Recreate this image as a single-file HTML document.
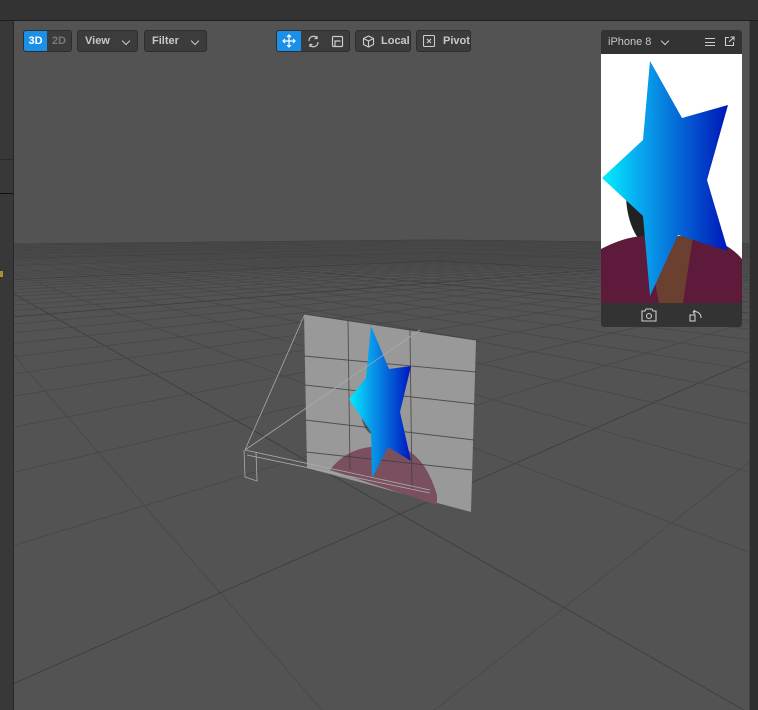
<!DOCTYPE html>
<html style="overflow:hidden"><head><meta charset="utf-8"><style>
*{box-sizing:border-box;margin:0;padding:0}
body{width:758px;height:710px;overflow:hidden;background:#535353;font-family:"Liberation Sans",sans-serif;position:relative}
.top{position:absolute;left:0;top:0;width:758px;height:21px;background:#333;border-bottom:1px solid #1e1e1e}
.left{position:absolute;left:0;top:21px;width:14px;height:689px;background:#383838;border-right:1px solid #282828}
.right{position:absolute;left:749px;top:21px;width:9px;height:689px;background:#2f2f2f;border-left:1px solid #444}
.btn{position:absolute;top:30px;height:22px;background:#3c3c3c;border:1px solid #2e2e2e;border-radius:3px;color:#c8c8c8;font-size:11px;font-weight:bold;line-height:20px;display:flex;align-items:center}
.blue{background:#1a90e8;color:#fff}
svg{position:absolute;left:0;top:0}
.chev{position:absolute;right:8px;top:7px;width:6px;height:6px;border-right:1.5px solid #ccc;border-bottom:1.5px solid #ccc;transform:rotate(45deg)}
</style></head><body>
<svg id="g" width="758" height="710"></svg>
<div class="top"></div>
<div class="left"><div style="position:absolute;top:138px;left:0;width:13px;height:1px;background:#2a2a2a"></div><div style="position:absolute;top:172px;left:0;width:13px;height:1px;background:#111"></div><div style="position:absolute;top:250px;left:0;width:3px;height:6px;background:#a89030"></div></div>
<div class="right"></div>

<div class="btn" style="left:23px;width:49px;padding:0">
 <span class="blue" style="width:23px;height:20px;text-align:center;border-radius:2px 0 0 2px">3D</span><span style="width:24px;text-align:center;color:#777">2D</span></div>
<div class="btn" style="left:77px;width:61px;padding-left:7px">View<span class="chev"></span></div>
<div class="btn" style="left:144px;width:63px;padding-left:7px">Filter<span class="chev"></span></div>
<div class="btn" style="left:276px;width:74px;padding:0">
 <span class="blue" style="width:24px;height:20px;border-radius:2px 0 0 2px;display:flex;align-items:center;justify-content:center"><svg style="position:static" width="14" height="14" viewBox="0 0 14 14" fill="none" stroke="#fff" stroke-width="1.2"><path d="M7 1v12M1 7h12M5 3l2-2 2 2M5 11l2 2 2-2M3 5L1 7l2 2M11 5l2 2-2 2"/></svg></span>
 <span style="width:24px;display:flex;justify-content:center"><svg style="position:static" width="13" height="13" viewBox="0 0 13 13" fill="none" stroke="#ccc" stroke-width="1.2"><path d="M2 6a4.5 4.5 0 0 1 8-3M11 7a4.5 4.5 0 0 1-8 3M10 1v2.5H7.5M3 12V9.5h2.5"/></svg></span>
 <span style="width:24px;display:flex;justify-content:center"><svg style="position:static" width="13" height="13" viewBox="0 0 13 13" fill="none" stroke="#ccc" stroke-width="1.2"><rect x="1.5" y="1.5" width="10" height="10" rx="1"/><path d="M4 11.5V6h5.5"/></svg></span></div>
<div class="btn" style="left:355px;width:56px;padding-left:6px"><svg style="position:static;margin-right:6px" width="13" height="13" viewBox="0 0 13 13" fill="none" stroke="#ccc" stroke-width="1.1"><path d="M6.5 1l5 2.5v6l-5 2.5-5-2.5v-6zM1.5 3.5l5 2.5 5-2.5M6.5 6v6"/></svg>Local</div>
<div class="btn" style="left:416px;width:55px;padding-left:6px"><svg style="position:static;margin-right:8px" width="12" height="12" viewBox="0 0 12 12" fill="none" stroke="#ccc" stroke-width="1.1"><rect x="0.5" y="0.5" width="11" height="11" rx="1"/><path d="M4 4l4 4M8 4l-4 4"/></svg>Pivot</div>

<!-- phone -->
<div style="position:absolute;left:601px;top:30px;width:141px;height:297px;background:#333;border-radius:3px;overflow:hidden">
 <div style="position:absolute;left:7px;top:6px;color:#c8c8c8;font-size:11px">iPhone 8</div>
 <span class="chev" style="right:auto;left:61px;top:8px"></span>
 <div style="position:absolute;left:104px;top:8px;width:10px;height:8px;border-top:1px solid #ccc;border-bottom:1px solid #ccc"><div style="margin-top:2.5px;height:1px;background:#ccc"></div></div>
 <svg style="left:123px;top:6px" width="11" height="11" viewBox="0 0 11 11" fill="none" stroke="#ccc" stroke-width="1.1"><path d="M5 1.5H1.5v8h8V6M6.5 1h3.5v3.5M10 1L5 6"/></svg>
 <div style="position:absolute;left:0;top:24px;width:141px;height:249px;background:#fff;overflow:hidden">
  <svg width="141" height="249">
   <defs><linearGradient id="pg" x1="0" x2="1"><stop offset="0" stop-color="#00f0ff"/><stop offset="0.3" stop-color="#08a8ee"/><stop offset="1" stop-color="#0016b8"/></linearGradient></defs>
   <ellipse cx="55" cy="140" rx="30" ry="55" fill="#222"/>
   <path d="M0 195 Q25 182 45 182 L95 182 Q125 186 141 205 L141 249 L0 249Z" fill="#5e1a3a"/>
   <path d="M45 182 L58 249 L82 249 L92 182Z" fill="#6b4030"/>
   <path d="M49 7 L81 64 L127 51 L106 126 L127 197 L77 181 L49 242 L42 162 L1 124 L42 86Z" fill="url(#pg)"/>
  </svg>
 </div>
 <svg style="left:40px;top:278px" width="16" height="14" viewBox="0 0 16 14" fill="none" stroke="#ccc" stroke-width="1.1"><path d="M1 3h3l1-2h6l1 2h3v10H1z"/><circle cx="8" cy="8" r="2.5"/></svg>
 <svg style="left:88px;top:278px" width="14" height="14" viewBox="0 0 14 14" fill="none" stroke="#ccc" stroke-width="1.1"><rect x="1" y="7" width="5" height="6"/><path d="M4 4a6 6 0 0 1 8 6M4 4l2-2M4 4l2 2"/></svg>
</div>

<script>
var s='',f=560,h=1.5,cx=400,hy=234,a=0.72,ca=Math.cos(a),sa=Math.sin(a);
function P(x,z){var X=x*ca-z*sa,Z=x*sa+z*ca+3;return [X,Z];}
function seg(x1,z1,x2,z2,col,w){var A=P(x1,z1),B=P(x2,z2),n=0.15;
 if(A[1]<n&&B[1]<n)return; if(A[1]<n){var t=(n-A[1])/(B[1]-A[1]);A=[A[0]+t*(B[0]-A[0]),n];}
 if(B[1]<n){var t=(n-B[1])/(A[1]-B[1]);B=[B[0]+t*(A[0]-B[0]),n];}
 var N=40;var d='';for(var i=0;i<=N;i++){var t=i/N,X=A[0]+t*(B[0]-A[0]),Z=A[1]+t*(B[1]-A[1]);d+=(i?'L':'M')+(cx+f*X/Z).toFixed(1)+' '+(hy+f*h/Z).toFixed(1);}
 s+='<path d="'+d+'" stroke="'+col+'" stroke-width="'+w+'" fill="none"/>';}
var R=100;for(var i=-R;i<=R;i++){var c=(i%10==0)?'#3e3e3e':'#484848';var w=(Math.abs(i)>25)?0.5:0.9;seg(i,-R,i,R,c,w);seg(-R,i,R,i,c,w);}
s+='<rect x="0" y="0" width="758" height="'+(hy)+'" fill="#535353"/>';
s+='<defs><linearGradient id="sg" x1="0" x2="1"><stop offset="0" stop-color="#00f0ff"/><stop offset="0.3" stop-color="#08a8ee"/><stop offset="1" stop-color="#0016c0"/></linearGradient></defs>';
s+='<path d="M304 314 L476 340 L471 512 L307 468Z" fill="#999"/>';
s+='<path d="M330 470 Q345 450 370 447 L400 447 Q425 455 437 495 L437 505 L330 470Z" fill="#7a5060"/>';
s+='<ellipse cx="375" cy="405" rx="15" ry="30" fill="#555"/>';
s+='<path d="M304 314 L476 340 M304 356 L476 372 M305 385 L475 404 M305 420 L474 440 M306 452 L472 470 M348 320 L350 470 M410 330 L412 490" stroke="#3c3c3c" stroke-width="0.9" fill="none" opacity="0.8"/>';
s+='<path d="M371 326 L389 369 L411 366 L400 412 L411 461 L388 447 L372 478 L371 432 L349 399 L366 378Z" fill="url(#sg)"/>';
s+='<path d="M245 450 L304 316 M245 450 L420 330 M245 450 L430 490 M247 455 L430 493 M244 450 L245 477 L257 481 L256 452" stroke="#aaa" stroke-width="0.8" fill="none"/>';
document.getElementById('g').innerHTML=s;
</script>
</body></html>
